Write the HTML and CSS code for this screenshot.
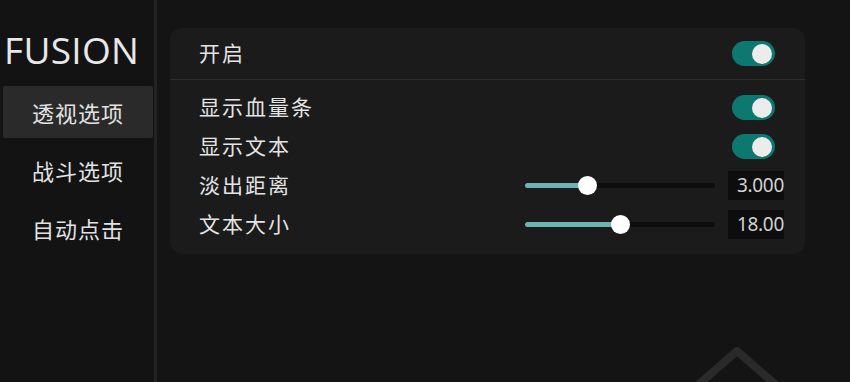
FILE: index.html
```html
<!DOCTYPE html>
<html lang="zh">
<head>
<meta charset="utf-8">
<title>FUSION</title>
<link rel="stylesheet" href="styles.css">
</head>
<body>
<div class="app">
  <aside class="sidebar">
    <div class="logo">FUSION</div>
    <nav class="nav">
      <div class="nav-item active">透视选项</div>
      <div class="nav-item">战斗选项</div>
      <div class="nav-item">自动点击</div>
    </nav>
  </aside>
  <main class="main">
    <section class="card">
      <div class="card-head">
        <span class="label">开启</span>
        <span class="toggle on"><span class="knob"></span></span>
      </div>
      <div class="card-body">
        <div class="row">
          <span class="label">显示血量条</span>
          <span class="toggle on"><span class="knob"></span></span>
        </div>
        <div class="row">
          <span class="label">显示文本</span>
          <span class="toggle on"><span class="knob"></span></span>
        </div>
        <div class="row">
          <span class="label">淡出距离</span>
          <div class="slider-group">
            <div class="slider"><div class="fill" style="width:62px"></div><span class="thumb"></span></div>
            <span class="value">3.000</span>
          </div>
        </div>
        <div class="row">
          <span class="label">文本大小</span>
          <div class="slider-group">
            <div class="slider"><div class="fill" style="width:95px"></div><span class="thumb"></span></div>
            <span class="value">18.00</span>
          </div>
        </div>
      </div>
    </section>
  </main>
  <svg class="watermark" width="140" height="50" viewBox="0 0 140 50">
    <path d="M40 52 L87 11 L134 52" fill="none" stroke="#2a2a2a" stroke-width="8" stroke-linejoin="round"/>
  </svg>
</div>
</body>
</html>
```

FILE: styles.css
```css
html, body {
  margin: 0;
  padding: 0;
  background: #141414;
}
body {
  width: 850px;
  height: 382px;
  overflow: hidden;
  font-family: "Noto Sans CJK SC", "Noto Sans", sans-serif;
  color: #e6e6e6;
}
.app {
  position: relative;
  display: flex;
  height: 382px;
}
.sidebar {
  width: 154px;
  flex: none;
  background: #131313;
  border-right: 3px solid #232323;
  box-sizing: content-box;
}
.logo {
  font-family: "Open Sans", "Noto Sans", sans-serif;
  font-weight: 400;
  font-size: 37px;
  line-height: 40px;
  color: #e8e8e8;
  padding: 30px 0 0 4px;
  letter-spacing: 0.3px;
  height: 46px;
}
.nav {
  display: flex;
  flex-direction: column;
  gap: 6px;
  padding: 10px 1px 0 3px;
}
.nav-item {
  height: 52px;
  display: flex;
  align-items: center;
  justify-content: center;
  font-size: 22px;
  letter-spacing: 1px;
  color: #e2e2e2;
}
.nav-item.active {
  background: #2a2a2a;
  border-radius: 2px;
}
.main {
  flex: 1;
  padding: 28px 45px 0 13px;
}
.card {
  background: #1b1b1b;
  border-radius: 12px;
}
.card-head {
  height: 52px;
  display: flex;
  align-items: center;
  justify-content: space-between;
  padding: 0 30px 0 29px;
  border-bottom: 1px solid #2d2d2d;
  box-sizing: border-box;
}
.card-body {
  padding: 8px 21px 10px 29px;
}
.row {
  height: 39px;
  display: flex;
  align-items: center;
  justify-content: space-between;
}
.label {
  font-size: 21px;
  color: #e4e4e4;
  letter-spacing: 2px;
  line-height: 30px;
  margin-top: -3px;
}
.toggle {
  width: 43px;
  height: 25px;
  border-radius: 13px;
  background: #0c7870;
  position: relative;
  flex: none;
}
.row .toggle {
  margin-right: 9px;
}
.toggle .knob {
  position: absolute;
  right: 3px;
  top: 2.5px;
  width: 20px;
  height: 20px;
  border-radius: 50%;
  background: #ececec;
}
.slider-group {
  display: flex;
  align-items: center;
  gap: 13px;
}
.slider {
  position: relative;
  width: 190px;
  height: 5px;
  border-radius: 3px;
  background: #0d0d0d;
  display: flex;
}
.fill {
  height: 5px;
  border-radius: 3px;
  background: #6ab4b4;
}
.thumb {
  width: 19px;
  height: 19px;
  border-radius: 50%;
  background: #ffffff;
  margin: -7px 0 0 -9.5px;
  flex: none;
}
.value {
  width: 56px;
  height: 29px;
  background: #0d0d0d;
  font-family: "Noto Sans", sans-serif;
  font-size: 19px;
  line-height: 29px;
  text-align: right;
  color: #d2d2d2;
  padding-right: 0;
  box-sizing: border-box;
  letter-spacing: -0.3px;
}
.watermark {
  position: absolute;
  left: 650px;
  top: 340px;
}
```
